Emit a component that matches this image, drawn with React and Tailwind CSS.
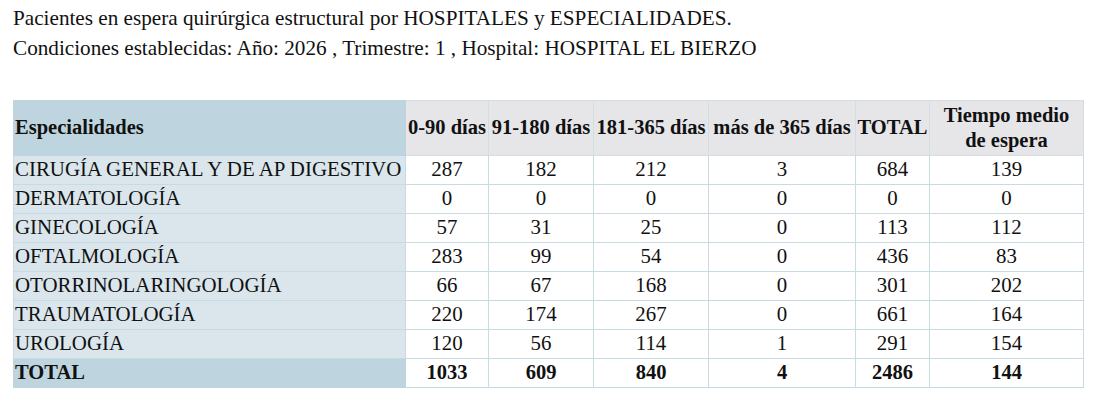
import React from "react";

const rows = [
  ["CIRUGÍA GENERAL Y DE AP DIGESTIVO", 287, 182, 212, 3, 684, 139],
  ["DERMATOLOGÍA", 0, 0, 0, 0, 0, 0],
  ["GINECOLOGÍA", 57, 31, 25, 0, 113, 112],
  ["OFTALMOLOGÍA", 283, 99, 54, 0, 436, 83],
  ["OTORRINOLARINGOLOGÍA", 66, 67, 168, 0, 301, 202],
  ["TRAUMATOLOGÍA", 220, 174, 267, 0, 661, 164],
  ["UROLOGÍA", 120, 56, 114, 1, 291, 154],
];

const total = ["TOTAL", 1033, 609, 840, 4, 2486, 144];

export default function App() {
  return (
    <div
      className="bg-white text-[#111] w-[1098px] h-[401px] overflow-hidden"
      style={{ fontFamily: '"Liberation Serif", "Times New Roman", serif' }}
    >
      <div className="pl-[13px] pt-[3px] text-[21.2px] leading-[30px]">
        <p>Pacientes en espera quirúrgica estructural por HOSPITALES y ESPECIALIDADES.</p>
        <p>Condiciones establecidas: Año: 2026 , Trimestre: 1 , Hospital: HOSPITAL EL BIERZO</p>
      </div>
      <div className="pl-[13px] pt-[37px]">
        <table className="table-fixed w-[1070px] border-collapse text-[20.9px] leading-[23px]">
          <colgroup>
            <col className="w-[392px]" />
            <col className="w-[83px]" />
            <col className="w-[105px]" />
            <col className="w-[115px]" />
            <col className="w-[147px]" />
            <col className="w-[74px]" />
            <col className="w-[154px]" />
          </colgroup>
          <thead>
            <tr className="h-[55px] font-bold text-[20.5px]">
              <th className="bg-[#bed5df] border border-[#bed5df] text-left pl-[1px] pb-[1px]">Especialidades</th>
              <th className="bg-[#e6e6e9] border border-[#d3dde2] whitespace-nowrap pb-[2px]">0-90 días</th>
              <th className="bg-[#e6e6e9] border border-[#d3dde2] whitespace-nowrap pb-[2px]">91-180 días</th>
              <th className="bg-[#e6e6e9] border border-[#d3dde2] whitespace-nowrap pb-[2px]">181-365 días</th>
              <th className="bg-[#e6e6e9] border border-[#d3dde2] whitespace-nowrap pb-[2px]">más de 365 días</th>
              <th className="bg-[#e6e6e9] border border-[#d3dde2] whitespace-nowrap pb-[2px]">TOTAL</th>
              <th className="bg-[#e6e6e9] border border-[#d3dde2] leading-[25px] pb-[1px]">
                Tiempo medio<br />de espera
              </th>
            </tr>
          </thead>
          <tbody>
            {rows.map((r) => (
              <tr key={r[0]} className="h-[29px]">
                <td className="bg-[#dae6ec] border border-[#c9dbe2] text-left pl-[1px] whitespace-nowrap pb-[1px]">{r[0]}</td>
                {r.slice(1).map((v, i) => (
                  <td key={i} className="border border-[#c9dbe2] text-center pb-[1px]">{v}</td>
                ))}
              </tr>
            ))}
            <tr className="h-[29px] font-bold text-[20.5px]">
              <td className="bg-[#bed5df] border border-[#bed5df] text-left pl-[1px] pb-[1px]">{total[0]}</td>
              {total.slice(1).map((v, i) => (
                <td key={i} className="border border-[#c9dbe2] text-center pb-[1px]">{v}</td>
              ))}
            </tr>
          </tbody>
        </table>
      </div>
    </div>
  );
}
